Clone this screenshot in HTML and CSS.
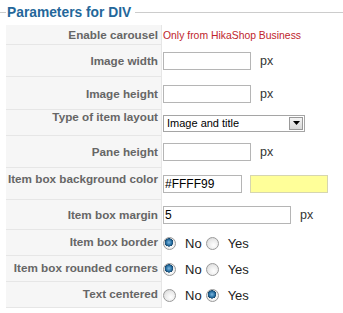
FILE: index.html
```html
<!DOCTYPE html>
<html>
<head>
<meta charset="utf-8">
<link rel="stylesheet" href="styles.css">
</head>
<body>
<div class="legend"><span class="legend-text">Parameters for DIV</span></div>
<div class="params">
  <div class="key">Enable carousel</div>
  <div class="val"><span class="business">Only from HikaShop Business</span></div>

  <div class="key">Image width</div>
  <div class="val"><span class="input w88"></span><span class="unit">px</span></div>

  <div class="key">Image height</div>
  <div class="val"><span class="input w88"></span><span class="unit">px</span></div>

  <div class="key top">Type of item layout</div>
  <div class="val"><span class="select"><span class="select-text">Image and title</span><span class="select-btn"><svg width="7" height="4" viewBox="0 0 7 4"><path d="M0 0H7L3.5 4Z" fill="#000"/></svg></span></span></div>

  <div class="key">Pane height</div>
  <div class="val"><span class="input w88"></span><span class="unit">px</span></div>

  <div class="key top4">Item box background color</div>
  <div class="val"><span class="input w79">#FFFF99</span><span class="swatch"></span></div>

  <div class="key">Item box margin</div>
  <div class="val"><span class="input w128">5</span><span class="unit">px</span></div>

  <div class="key radio-key">Item box border</div>
  <div class="val"><span class="radio on"></span><span class="opt">No</span><span class="radio"></span><span class="opt">Yes</span></div>

  <div class="key radio-key">Item box rounded corners</div>
  <div class="val"><span class="radio on"></span><span class="opt">No</span><span class="radio"></span><span class="opt">Yes</span></div>

  <div class="key radio-key">Text centered</div>
  <div class="val"><span class="radio"></span><span class="opt">No</span><span class="radio on"></span><span class="opt">Yes</span></div>
</div>
</body>
</html>
```
FILE: styles.css
```css
body {
  margin: 0;
  background: #fff;
  font-family: "Liberation Sans", Arial, sans-serif;
}
.legend {
  display: flex;
  align-items: center;
  height: 25px;
}
.legend::before {
  content: "";
  width: 6px;
  border-top: 1px solid #ccc;
}
.legend::after {
  content: "";
  flex: 1;
  border-top: 1px solid #ccc;
  margin-left: 4px;
}
.legend-text {
  padding-left: 1px;
  font-size: 13.8px;
  font-weight: bold;
  color: #24679a;
  line-height: 16px;
}
.params {
  margin-left: 6px;
  display: grid;
  grid-template-columns: 156px 1fr;
  grid-template-rows: 20px 32px 33px 26px 32px 32px 30px 26px 26px 26px;
}
.key {
  box-sizing: border-box;
  background: #f6f6f6;
  border-bottom: 1px solid #e6e6e6;
  border-right: 1px solid #e6e6e6;
  display: flex;
  align-items: center;
  justify-content: flex-end;
  padding-right: 3px;
  font-size: 11.7px;
  font-weight: bold;
  color: #666;
  white-space: nowrap;
}
.key.top {
  align-items: flex-start;
  padding-top: 0;
}
.key.top4 {
  align-items: flex-start;
  padding-top: 4px;
}
.key.radio-key {
  padding-bottom: 3px;
}
.val {
  display: flex;
  align-items: center;
  padding-left: 1px;
  font-size: 13px;
  color: #222;
}
.business {
  font-size: 10.4px;
  color: #c0242c;
}
.input {
  box-sizing: border-box;
  height: 18px;
  border: 1px solid #b5b5b5;
  background: #fff;
  font-size: 12px;
  color: #000;
  line-height: 16px;
  padding-left: 1px;
}
.w88 { width: 88px; }
.w79 { width: 79px; }
.w128 { width: 128px; }
.unit {
  margin-left: 9px;
  font-size: 12.5px;
  color: #333;
}
.swatch {
  box-sizing: border-box;
  width: 78px;
  height: 18px;
  margin-left: 8px;
  background: #ffff99;
  border: 1px solid #d6d6b0;
}
.select {
  box-sizing: border-box;
  width: 142px;
  height: 17px;
  border: 1px solid #a5a5a5;
  background: #fff;
  display: flex;
  align-items: center;
  justify-content: space-between;
  padding: 0 1px 0 3px;
}
.select-text {
  font-size: 11px;
  color: #000;
}
.select-btn {
  box-sizing: border-box;
  width: 14px;
  height: 13px;
  border: 1px solid #999;
  background: linear-gradient(#f4f4f4, #d8d8d8);
  display: flex;
  align-items: center;
  justify-content: center;
}
.radio {
  box-sizing: border-box;
  width: 13px;
  height: 13px;
  border-radius: 50%;
  border: 1px solid #9a9a9a;
  background: radial-gradient(circle at 60% 65%, #ffffff 0%, #e9e9e9 55%, #cfcfcf 100%);
  flex: none;
}
.radio.on {
  background:
    radial-gradient(circle at 45% 40%, #7fb6de 0%, #2f78ab 28%, #14466e 45%, transparent 48%),
    radial-gradient(circle at 60% 65%, #ffffff 0%, #e9e9e9 55%, #cfcfcf 100%);
}
.opt {
  margin-left: 9px;
  margin-right: 4px;
}
```
